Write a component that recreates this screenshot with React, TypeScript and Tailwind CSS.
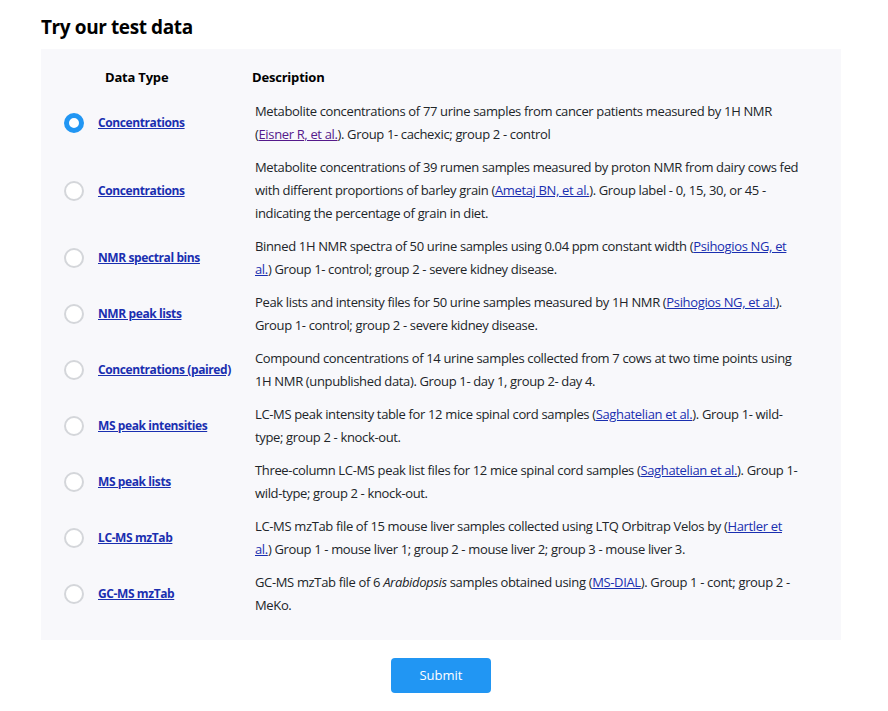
import React from "react";

const L = ({ children, visited }: { children: React.ReactNode; visited?: boolean }) => (
  <a href="#" className={visited ? "underline text-[#551a8b]" : "underline text-[#1a2fb0]"}>
    {children}
  </a>
);

type Row = { label: string; desc: React.ReactNode };

const rows: Row[] = [
  {
    label: "Concentrations",
    desc: (
      <>
        Metabolite concentrations of 77 urine samples from cancer patients measured by 1H NMR
        <br />(<L visited>Eisner R, et al.</L>). Group 1- cachexic; group 2 - control
      </>
    ),
  },
  {
    label: "Concentrations",
    desc: (
      <>
        Metabolite concentrations of 39 rumen samples measured by proton NMR from dairy cows fed
        <br />
        with different proportions of barley grain (<L>Ametaj BN, et al.</L>). Group label - 0, 15, 30, or 45 -
        <br />
        indicating the percentage of grain in diet.
      </>
    ),
  },
  {
    label: "NMR spectral bins",
    desc: (
      <>
        Binned 1H NMR spectra of 50 urine samples using 0.04 ppm constant width (
        <L>
          Psihogios NG, et
          <br />
          al.
        </L>
        ) Group 1- control; group 2 - severe kidney disease.
      </>
    ),
  },
  {
    label: "NMR peak lists",
    desc: (
      <>
        Peak lists and intensity files for 50 urine samples measured by 1H NMR (<L>Psihogios NG, et al.</L>).
        <br />
        Group 1- control; group 2 - severe kidney disease.
      </>
    ),
  },
  {
    label: "Concentrations (paired)",
    desc: (
      <>
        Compound concentrations of 14 urine samples collected from 7 cows at two time points using
        <br />
        1H NMR (unpublished data). Group 1- day 1, group 2- day 4.
      </>
    ),
  },
  {
    label: "MS peak intensities",
    desc: (
      <>
        LC-MS peak intensity table for 12 mice spinal cord samples (<L>Saghatelian et al.</L>). Group 1- wild-
        <br />
        type; group 2 - knock-out.
      </>
    ),
  },
  {
    label: "MS peak lists",
    desc: (
      <>
        Three-column LC-MS peak list files for 12 mice spinal cord samples (<L>Saghatelian et al.</L>). Group 1-
        <br />
        wild-type; group 2 - knock-out.
      </>
    ),
  },
  {
    label: "LC-MS mzTab",
    desc: (
      <>
        LC-MS mzTab file of 15 mouse liver samples collected using LTQ Orbitrap Velos by (
        <L>
          Hartler et
          <br />
          al.
        </L>
        ) Group 1 - mouse liver 1; group 2 - mouse liver 2; group 3 - mouse liver 3.
      </>
    ),
  },
  {
    label: "GC-MS mzTab",
    desc: (
      <>
        GC-MS mzTab file of 6 <i>Arabidopsis</i> samples obtained using (<L>MS-DIAL</L>). Group 1 - cont; group 2 -
        <br />
        MeKo.
      </>
    ),
  },
];

export default function App() {
  const [sel, setSel] = React.useState(0);
  return (
    <div
      className="w-[888px] min-h-[711px] bg-white text-[#212529]"
      style={{ fontFamily: '"Open Sans", "Noto Sans", sans-serif' }}
    >
      <div className="ml-[41px] w-[800px] pt-[13px]">
        <h2 className="text-[19px] leading-[28px] font-bold text-black mb-[8px] tracking-[-0.4px]">Try our test data</h2>
        <div className="bg-[#f8f8fb] pt-[17px] pb-[18px]">
          <div className="flex text-[13px] leading-[23px] font-bold text-black pb-[6px] tracking-[-0.2px]">
            <div className="pl-[64px] w-[211px]">Data Type</div>
            <div>Description</div>
          </div>
          {rows.map((r, i) => (
            <div key={i} className="flex items-center py-[5px]">
              <div className="pl-[23px] w-[57px] flex-none">
                <button
                  onClick={() => setSel(i)}
                  className={
                    sel === i
                      ? "block w-[20px] h-[20px] rounded-full border-[5px] border-[#2196f3] bg-white"
                      : "block w-[20px] h-[20px] rounded-full border-2 border-[#d4d6da] bg-white"
                  }
                />
              </div>
              <div className="w-[157px] flex-none text-[12px] font-bold tracking-[-0.4px] whitespace-nowrap">
                <a href="#" className="underline text-[#1a2fb0]">
                  {r.label}
                </a>
              </div>
              <div className="flex-1 text-[13px] leading-[23px] tracking-[-0.35px] whitespace-nowrap">{r.desc}</div>
            </div>
          ))}
        </div>
        <div className="flex justify-center mt-[18px]">
          <button className="w-[100px] h-[35px] rounded-[4px] bg-[#2196f3] text-white text-[13px]">Submit</button>
        </div>
      </div>
    </div>
  );
}
